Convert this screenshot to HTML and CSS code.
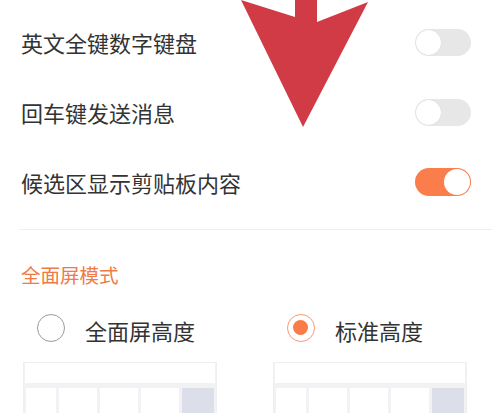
FILE: index.html
```html
<!DOCTYPE html>
<html lang="zh-CN">
<head>
<meta charset="utf-8">
<link rel="stylesheet" href="styles.css">
</head>
<body>
<div class="page">
  <div class="list">
    <div class="row">
      <span class="label">英文全键数字键盘</span>
      <span class="switch"><span class="knob"></span></span>
    </div>
    <div class="row">
      <span class="label">回车键发送消息</span>
      <span class="switch"><span class="knob"></span></span>
    </div>
    <div class="row">
      <span class="label">候选区显示剪贴板内容</span>
      <span class="switch on"><span class="knob"></span></span>
    </div>
  </div>
  <div class="divider"></div>
  <div class="section-title">全面屏模式</div>
  <div class="modes">
    <div class="mode">
      <div class="radio-row">
        <span class="radio"></span>
        <span class="radio-label">全面屏高度</span>
      </div>
      <div class="kb">
        <div class="kb-bar"></div>
        <div class="kb-keys">
          <span class="key k1"></span><span class="key"></span><span class="key"></span><span class="key"></span><span class="key fn"></span>
        </div>
      </div>
    </div>
    <div class="mode">
      <div class="radio-row">
        <span class="radio checked"></span>
        <span class="radio-label">标准高度</span>
      </div>
      <div class="kb">
        <div class="kb-bar"></div>
        <div class="kb-keys">
          <span class="key k1"></span><span class="key"></span><span class="key"></span><span class="key"></span><span class="key fn"></span>
        </div>
      </div>
    </div>
  </div>
  <svg class="arrow" width="492" height="140" viewBox="0 0 492 140">
    <polygon points="295,-5 317,-5 317,22 368,2 303,127 241,0 295,17" fill="#d03b45"/>
  </svg>
</div>
</body>
</html>
```
FILE: styles.css
```css
html, body {
  margin: 0;
  padding: 0;
  background: #ffffff;
}
body {
  font-family: "Noto Sans CJK SC", "Noto Sans", sans-serif;
  color: #333333;
  overflow: hidden;
}
.page {
  position: relative;
  width: 492px;
  height: 413px;
  overflow: hidden;
}
.list {
  padding-top: 7px;
}
.row {
  height: 70px;
  display: flex;
  align-items: center;
  justify-content: space-between;
  padding-left: 21px;
  padding-right: 21px;
}
.label {
  font-size: 22px;
  line-height: 30px;
  color: #333;
}
.switch {
  position: relative;
  width: 56px;
  height: 27px;
  border-radius: 14px;
  background: #e7e7e7;
  box-sizing: border-box;
}
.switch .knob {
  position: absolute;
  left: 1px;
  top: 1px;
  width: 25px;
  height: 25px;
  border-radius: 50%;
  background: #ffffff;
  box-shadow: 0 0 1px rgba(0,0,0,0.15);
}
.switch.on {
  background: #fa7d4b;
  height: 28px;
}
.switch.on .knob {
  left: auto;
  right: 1px;
  top: 1px;
  width: 26px;
  height: 26px;
  box-shadow: none;
}
.divider {
  margin-top: 12px;
  margin-left: 19px;
  height: 1px;
  background: #eeeeee;
}
.section-title {
  margin-top: 33px;
  padding-left: 21px;
  font-size: 19.5px;
  line-height: 24px;
  color: #f07a45;
}
.modes {
  display: grid;
  grid-template-columns: 194px 194px;
  column-gap: 56px;
  padding-left: 23px;
  margin-top: 27px;
}
.radio-row {
  display: flex;
  align-items: center;
  height: 28px;
  padding-left: 14px;
}
.radio {
  width: 28px;
  height: 28px;
  border-radius: 50%;
  border: 1.5px solid #9a9a9a;
  box-sizing: border-box;
  margin-right: 20px;
  flex: none;
  position: relative;
}
.radio.checked {
  border-color: #f79a74;
}
.radio.checked::after {
  content: "";
  position: absolute;
  left: 5px;
  top: 5px;
  width: 15px;
  height: 15px;
  border-radius: 50%;
  background: #fa7b47;
}
.radio-label {
  font-size: 22px;
  line-height: 30px;
  color: #333;
  position: relative;
  top: 2px;
}
.kb {
  margin-top: 20px;
  background: #f2f2f4;
  border: 1px solid #efeff1;
  border-bottom: none;
  height: 60px;
}
.kb-bar {
  height: 20px;
  background: #ffffff;
  margin: 0 1px;
}
.kb-keys {
  display: flex;
  gap: 3px;
  padding: 5px 1px 0 2px;
}
.key {
  height: 40px;
  width: 38px;
  background: #ffffff;
}
.key.k1 {
  width: 30px;
}
.key.fn {
  width: 32px;
  background: #dcdfe9;
}
.arrow {
  position: absolute;
  left: 0;
  top: 0;
}
```
